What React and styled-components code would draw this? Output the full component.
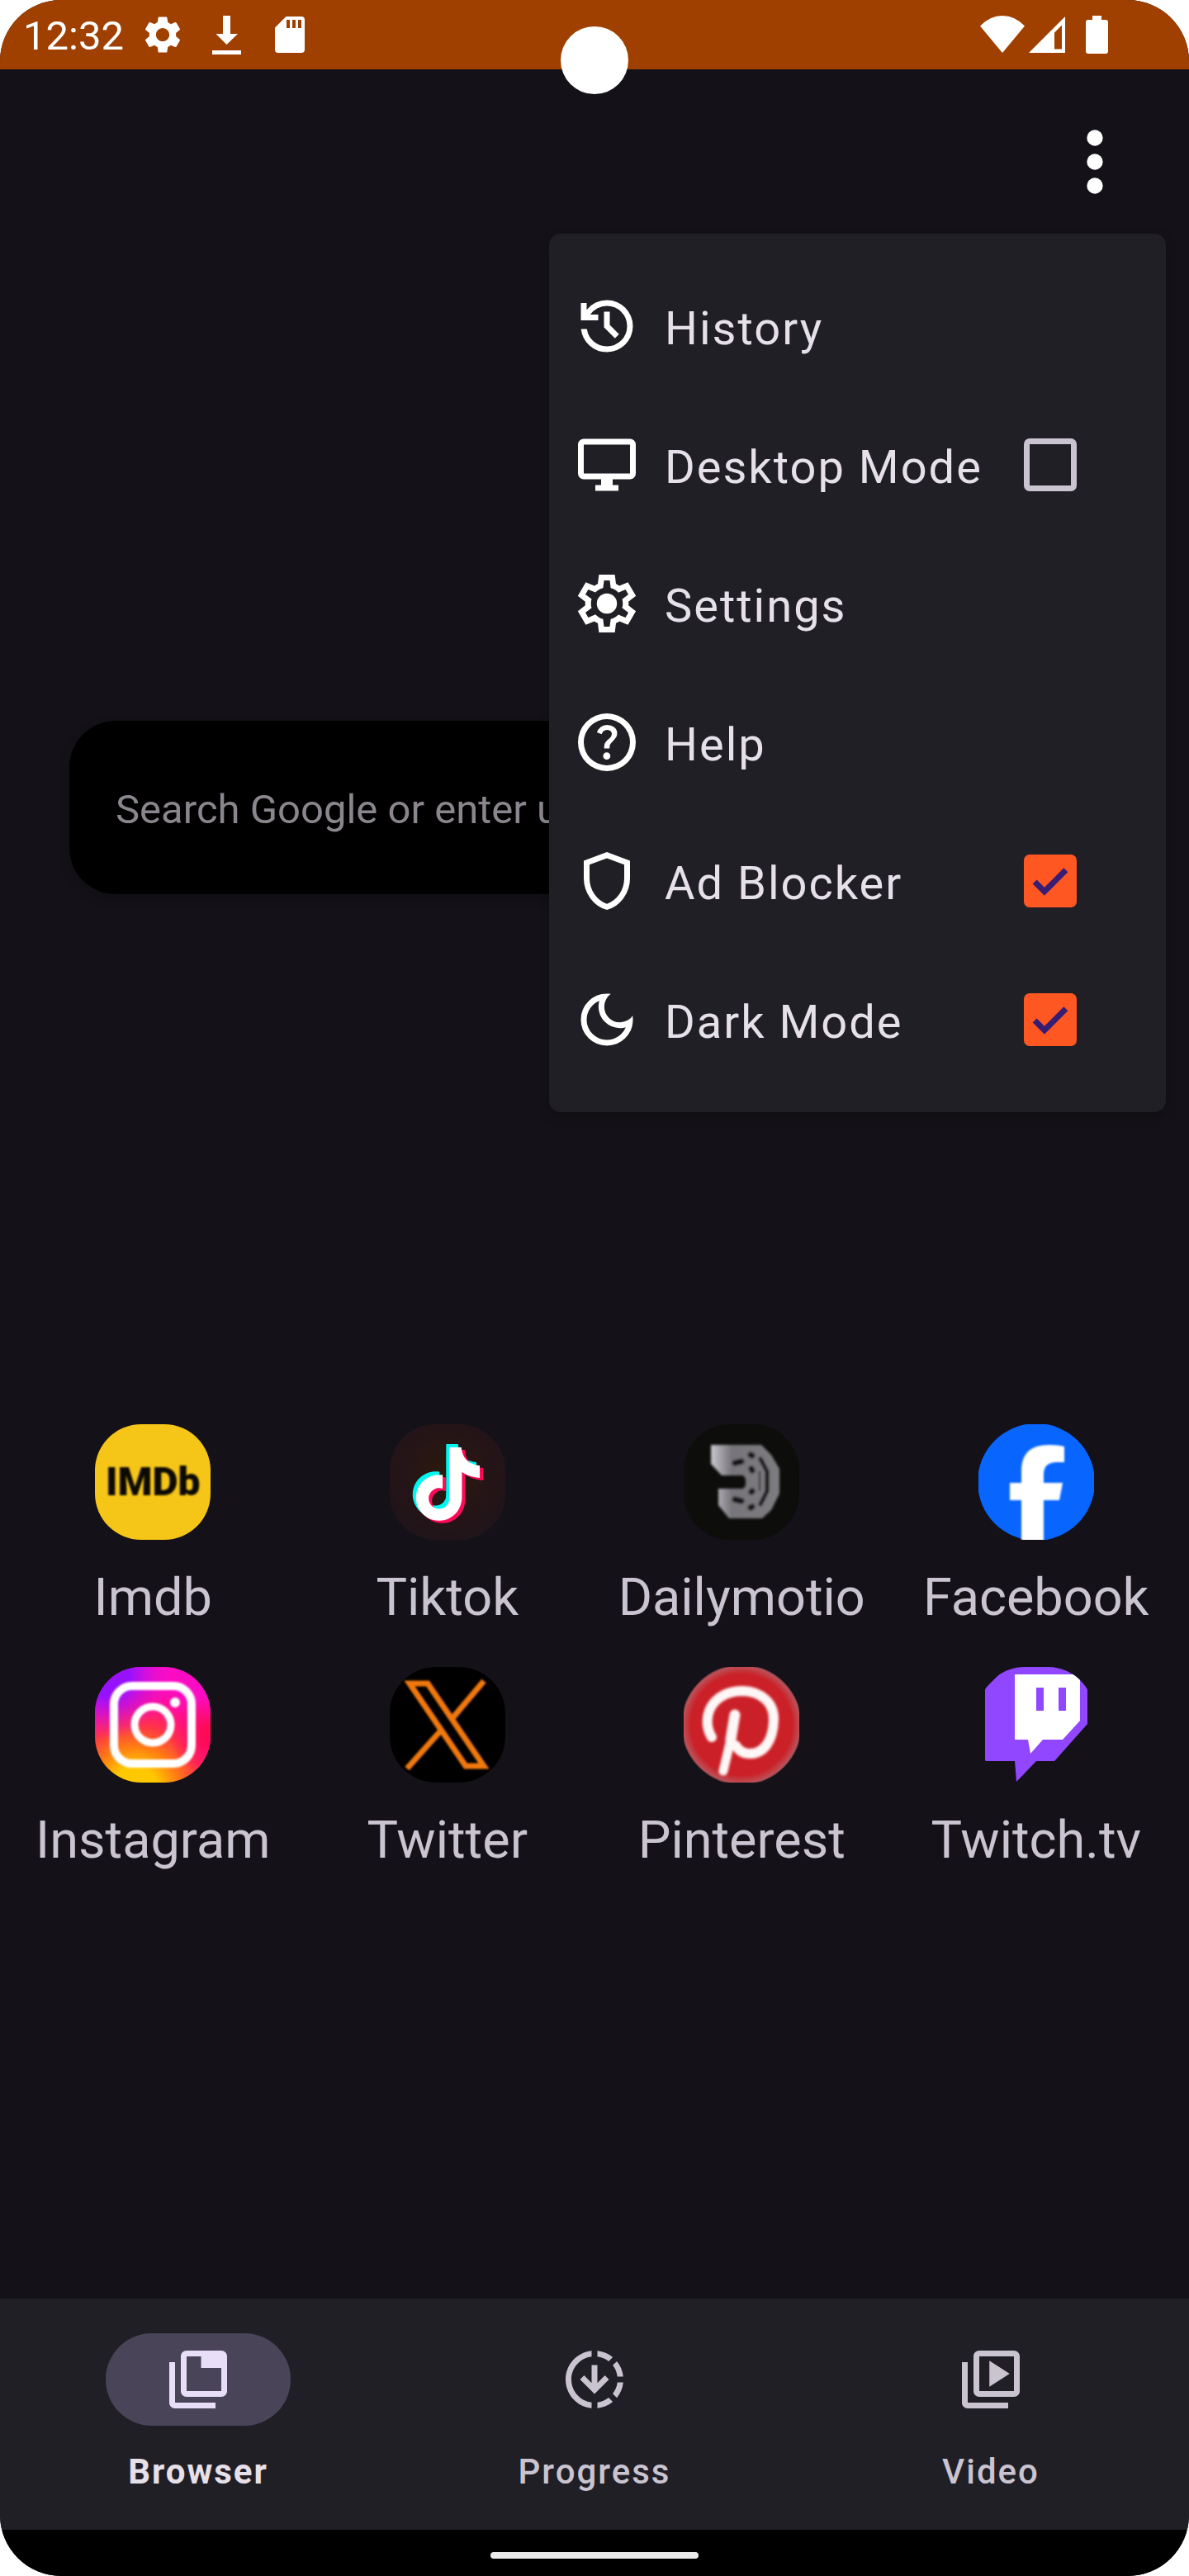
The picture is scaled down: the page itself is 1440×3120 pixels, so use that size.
import React, { useState } from "react";
import styled, { createGlobalStyle } from "styled-components";
import { MdSettings } from "react-icons/md";

const GlobalStyle = createGlobalStyle`
  *, *::before, *::after { box-sizing: border-box; }
  body { margin: 0; background: #ffffff; font-family: Roboto, "Noto Sans", sans-serif; }
`;

const Screen = styled.div`
  position: relative;
  display: flex;
  flex-direction: column;
  min-height: 100vh;
  overflow: hidden;
  border-radius: 74px;
  background: #141218;
`;

const StatusBar = styled.div`
  display: flex;
  justify-content: space-between;
  align-items: center;
  height: 84px;
  padding: 0 98px 0 28px;
  background: #a04000;
  color: #ffffff;
`;

const StatusLeft = styled.div`
  display: flex;
  align-items: center;
  gap: 20px;
`;

const StatusIcons = styled.div`
  display: flex;
  align-items: center;
  gap: ${(p) => p.$gap}px;

  svg { display: block; }
`;

const Clock = styled.time`
  padding-top: 4px;
  font-size: 49px;
  line-height: 58px;
`;

const CameraHole = styled.div`
  position: absolute;
  top: 32px;
  left: 50%;
  width: 82px;
  height: 82px;
  margin-left: -41px;
  border-radius: 50%;
  background: #ffffff;
`;

const Header = styled.header`
  position: relative;
  z-index: 1;
  display: flex;
  justify-content: flex-end;
  padding: 54px 56px 0 0;
`;

const MoreButton = styled.button`
  width: 116px;
  height: 116px;
  padding: 0;
  border: 0;
  background: transparent;
  color: #ffffff;

  svg { display: block; width: 100%; height: 100%; }
`;

const Menu = styled.div`
  position: absolute;
  top: 199px;
  right: 28px;
  width: 747px;
  padding: 28px 0;
  border-radius: 14px;
  background: #211f26;
  box-shadow: 0 6px 14px rgba(0, 0, 0, 0.25);
`;

const MenuRow = styled.div`
  display: flex;
  align-items: center;
  gap: 28px;
  width: 100%;
  height: 168px;
  padding: 0 108px 0 28px;
  border: 0;
  background: transparent;
  color: #e6e0e9;
  font: inherit;
  text-align: left;
`;

const MenuIcon = styled.svg`
  flex: none;
  width: 84px;
  height: 84px;
  fill: #ffffff;
`;

const MenuText = styled.span`
  flex: 1;
  padding-top: 6px;
  font-size: 56px;
  line-height: 66px;
  letter-spacing: 2px;
  white-space: nowrap;
`;

const CheckWrap = styled.span`
  display: grid;
  width: 64px;
  height: 64px;

  > * { grid-area: 1 / 1; }
  svg { width: 64px; height: 64px; fill: #381e72; pointer-events: none; }
`;

const CheckBox = styled.input`
  appearance: none;
  width: 64px;
  height: 64px;
  margin: 0;
  border: 7px solid #cac4d0;
  border-radius: 7px;
  background: transparent;

  &:checked { border-color: #ff5722; background: #ff5722; }
`;

const Main = styled.main`
  display: flex;
  flex: 1;
  flex-direction: column;
  gap: 642px;
  padding-top: 619px;
`;

const SearchBox = styled.input`
  height: 210px;
  margin: 0 84px;
  padding: 4px 56px 0;
  border: 0;
  border-radius: 56px;
  background: #000000;
  box-shadow: 0 6px 14px rgba(0, 0, 0, 0.2);
  color: #e6e0e9;
  font-family: inherit;
  font-size: 49px;

  &::placeholder { color: #8b868d; opacity: 1; }
`;

const Shortcuts = styled.nav`
  display: grid;
  grid-template-columns: repeat(4, 1fr);
  row-gap: 47px;
  padding: 0 7px;
`;

const Shortcut = styled.a`
  display: flex;
  flex-direction: column;
  align-items: center;
  gap: 33px;
  color: #cac4d0;
  font-size: 63px;
  line-height: 74px;
  text-decoration: none;
`;

const Tile = styled.span`
  display: flex;
  align-items: center;
  justify-content: center;
  width: 140px;
  height: 140px;
  overflow: hidden;
  border-radius: 56px;
  background: ${(p) => p.$bg || "transparent"};

  svg { display: block; }
`;

const ImdbMark = styled.span`
  color: #0c0a02;
  font-family: "Liberation Sans Narrow", Roboto, sans-serif;
  font-size: 48px;
  font-weight: 900;
  line-height: 54px;
  filter: blur(1px);
`;

const BottomNav = styled.nav`
  display: grid;
  grid-template-columns: repeat(3, 1fr);
  padding: 42px 0 45px;
  background: #211f26;
`;

const Tab = styled.button`
  display: flex;
  flex-direction: column;
  align-items: center;
  gap: 31px;
  padding: 0;
  border: 0;
  background: transparent;
  color: ${(p) => (p.$active ? "#e6e0e9" : "#cac4d0")};
  font-family: inherit;
  font-size: 42px;
  font-weight: ${(p) => (p.$active ? 700 : 500)};
  line-height: 50px;
  letter-spacing: 2px;
`;

const Pill = styled.span`
  display: flex;
  align-items: center;
  justify-content: center;
  width: 224px;
  height: 112px;
  border-radius: 56px;
  background: ${(p) => (p.$active ? "#4a4458" : "transparent")};
  color: ${(p) => (p.$active ? "#e8def8" : "#cac4d0")};

  svg { width: 84px; height: 84px; fill: currentColor; }
`;

const GestureBar = styled.div`
  display: flex;
  align-items: center;
  justify-content: center;
  height: 56px;
  padding-top: 6px;
  background: #000000;
`;

const GestureHandle = styled.div`
  width: 252px;
  height: 8px;
  border-radius: 4px;
  background: #ebebeb;
`;

const icons = {
  history:
    "M12 21q-3.45 0-6.012-2.288T3.05 13H5.1q.35 2.6 2.313 4.3T12 19q2.925 0 4.963-2.037T19 12t-2.037-4.962T12 5q-1.725 0-3.225.8T6.25 8H9v2H3V4h2v2.35q1.275-1.6 3.113-2.475T12 3q1.875 0 3.513.713t2.85 1.924t1.925 2.85T21 12t-.712 3.513t-1.925 2.85t-2.85 1.925T12 21m2.8-4.8L11 12.4V7h2v4.6l3.2 3.2z",
  desktop:
    "M8 21v-2h2v-2H4q-.825 0-1.412-.587T2 15V5q0-.825.588-1.412T4 3h16q.825 0 1.413.588T22 5v10q0 .825-.587 1.413T20 17h-6v2h2v2zm-4-6h16V5H4z",
  settings:
    "m9.25 22l-.4-3.2q-.325-.125-.612-.3t-.563-.375L4.7 19.375l-2.75-4.75l2.575-1.95Q4.5 12.5 4.5 12.338v-.675q0-.163.025-.338L1.95 9.375l2.75-4.75l2.975 1.25q.275-.2.575-.375t.6-.3l.4-3.2h5.5l.4 3.2q.325.125.613.3t.562.375l2.975-1.25l2.75 4.75l-2.575 1.95q.025.175.025.338v.674q0 .163-.05.338l2.575 1.95l-2.75 4.75l-2.95-1.25q-.275.2-.575.375t-.6.3l-.4 3.2zM11 20h1.975l.35-2.65q.775-.2 1.438-.587t1.212-.938l2.475 1.025l.975-1.7l-2.15-1.625q.125-.35.175-.737T17.5 12t-.05-.787t-.175-.738l2.15-1.625l-.975-1.7l-2.475 1.05q-.55-.575-1.212-.962t-1.438-.588L13 4h-1.975l-.35 2.65q-.775.2-1.437.588t-1.213.937L5.55 7.15l-.975 1.7l2.15 1.6q-.125.375-.175.75t-.05.8q0 .4.05.775t.175.75l-2.15 1.625l.975 1.7l2.475-1.05q.55.575 1.213.963t1.437.587zM12 15.5a3.5 3.5 0 1 0 0-7a3.5 3.5 0 0 0 0 7z",
  help:
    "M11.95 18q.525 0 .888-.363t.362-.887t-.362-.888t-.888-.362t-.887.363t-.363.887t.363.888t.887.362m-.9-3.85h1.85q0-.825.188-1.3t1.062-1.3q.65-.65 1.025-1.238T15.55 8.9q0-1.4-1.025-2.15T12.1 6q-1.425 0-2.312.75T8.55 8.55l1.65.65q.125-.45.563-.975T12.1 7.7q.8 0 1.2.438t.4.962q0 .5-.3.938t-.75.812q-1.1.975-1.35 1.475t-.25 1.825M12 22A10 10 0 1 0 12 2A10 10 0 1 0 12 22M12 20A8 8 0 1 1 12 4A8 8 0 1 1 12 20",
  shield:
    "M12 22q-3.475-.875-5.738-3.988T4 11.1V5l8-3l8 3v6.1q0 3.8-2.262 6.913T12 22m0-2.1q2.6-.825 4.3-3.3t1.7-5.5V6.375l-6-2.25l-6 2.25V11.1q0 3.025 1.7 5.5t4.3 3.3",
  moon:
    "M12 21q-3.75 0-6.375-2.625T3 12t2.625-6.375T12 3q.35 0 .688.025t.662.075q-1.025.725-1.638 1.888T11.1 7.5q0 2.25 1.575 3.825T16.5 12.9q1.375 0 2.525-.613T20.9 10.65q.05.325.075.662T21 12q0 3.75-2.625 6.375T12 21m0-2q2.2 0 3.95-1.212t2.55-3.163q-.5.125-1 .2t-1 .075q-3.075 0-5.238-2.163T9.1 7.5q0-.5.075-1t.2-1q-1.95.8-3.163 2.55T5 12q0 2.9 2.05 4.95T12 19",
};

const menuItems = [
  { label: "History", icon: "history" },
  { label: "Desktop Mode", icon: "desktop", toggle: true, initial: false },
  { label: "Settings", icon: "settings" },
  { label: "Help", icon: "help" },
  { label: "Ad Blocker", icon: "shield", toggle: true, initial: true },
  { label: "Dark Mode", icon: "moon", toggle: true, initial: true },
];

function MenuItem({ label, icon, toggle, initial }) {
  const [on, setOn] = useState(initial);
  return (
    <MenuRow as={toggle ? "label" : "button"}>
      <MenuIcon viewBox="0 0 24 24" aria-hidden="true">
        <path fillRule="evenodd" d={icons[icon]} />
      </MenuIcon>
      <MenuText>{label}</MenuText>
      {toggle && (
        <CheckWrap>
          <CheckBox type="checkbox" checked={on} onChange={() => setOn(!on)} />
          {on && (
            <svg viewBox="3 3 18 18" aria-hidden="true">
              <path d="M10 17L6 13l1.4-1.4L10 14.2l6.6-6.6L18 9z" />
            </svg>
          )}
        </CheckWrap>
      )}
    </MenuRow>
  );
}

function Logo({ children }) {
  return (
    <svg width="140" height="140" viewBox="0 0 140 140" aria-hidden="true">
      {children}
    </svg>
  );
}

const notePath =
  "M12.525.02c1.31-.02 2.61-.01 3.91-.02.08 1.53.63 3.09 1.75 4.17 1.12 1.11 2.7 1.62 4.24 1.79v4.03c-1.44-.05-2.89-.35-4.2-.97-.57-.26-1.1-.59-1.62-.93-.01 2.92.01 5.84-.02 8.75-.08 1.4-.54 2.79-1.35 3.94-1.31 1.92-3.58 3.17-5.91 3.21-1.43.08-2.86-.31-4.08-1.03-2.02-1.19-3.44-3.37-3.65-5.71-.02-.5-.03-1-.01-1.49.18-1.9 1.12-3.72 2.58-4.96 1.66-1.44 3.98-2.13 6.15-1.72.02 1.48-.04 2.96-.04 4.44-.99-.32-2.15-.23-3.02.37-.63.41-1.11 1.04-1.36 1.75-.21.51-.15 1.07-.14 1.61.24 1.64 1.82 3.02 3.5 2.87 1.12-.01 2.19-.66 2.77-1.61.19-.33.4-.67.41-1.06.1-1.79.06-3.57.07-5.36.01-4.03-.01-8.05.02-12.07z";

const TiktokLogo = () => (
  <Logo>
    <g transform="translate(22 24) scale(3.7)" fill="#00f7ef">
      <path d={notePath} />
    </g>
    <g transform="translate(30 31) scale(3.7)" fill="#ff0a5a">
      <path d={notePath} />
    </g>
    <g transform="translate(26 28) scale(3.7)" fill="#ffffff">
      <path d={notePath} />
    </g>
  </Logo>
);

const DailymotionLogo = () => (
  <Logo>
    <defs>
      <linearGradient id="dmShade" x1="0" y1="0" x2="1" y2="0">
        <stop offset="0" stopColor="#c9c7cf" />
        <stop offset="0.3" stopColor="#77757a" />
        <stop offset="1" stopColor="#7d7b80" />
      </linearGradient>
      <filter id="dmBlur">
        <feGaussianBlur stdDeviation="1.6" />
      </filter>
    </defs>
    <g filter="url(#dmBlur)">
      <path
        fill="url(#dmShade)"
        d="M33 25H94L106 37L116 54V84L106 104L95 114H55L42 98V78H72L75 74V66L72 62H46L33 48Z"
      />
      <g fill="none" stroke="#141317" strokeWidth="7" strokeLinecap="round">
        <path d="M62 47L70 45M81 37L83 38M82 54L83 56M82 82L83 81M62 91L70 93M81 101L83 100" />
        <path strokeWidth="5" d="M93 42L101 57V81L93 97" />
        <path strokeWidth="2" d="M92 58V80" />
      </g>
    </g>
  </Logo>
);

const FacebookLogo = () => (
  <Logo>
    <defs>
      <filter id="fbBlur">
        <feGaussianBlur stdDeviation="0.8" />
      </filter>
    </defs>
    <circle cx="70" cy="70" r="71" fill="#0866ff" />
    <path
      fill="#ffffff"
      filter="url(#fbBlur)"
      d="M52 144V92H38V71H52V58C52 36 62 25 86 25Q97 25 104 27V46H96C84 46 79 51 79 61V71H102L98 92H79V144Z"
    />
  </Logo>
);

const InstagramLogo = () => (
  <Logo>
    <defs>
      <radialGradient id="igBase" gradientUnits="userSpaceOnUse" cx="48" cy="150" r="160">
        <stop offset="0.18" stopColor="#ffc800" />
        <stop offset="0.34" stopColor="#ff7a14" />
        <stop offset="0.5" stopColor="#ff3348" />
        <stop offset="0.66" stopColor="#ff1090" />
        <stop offset="0.82" stopColor="#fb0cc4" />
      </radialGradient>
      <radialGradient id="igViolet" gradientUnits="userSpaceOnUse" cx="14" cy="8" r="80">
        <stop offset="0.35" stopColor="#9612ff" />
        <stop offset="1" stopColor="#f010d0" stopOpacity="0" />
      </radialGradient>
      <radialGradient id="igRose" gradientUnits="userSpaceOnUse" cx="140" cy="82" r="50">
        <stop offset="0.2" stopColor="#ff0a55" />
        <stop offset="1" stopColor="#ff0a70" stopOpacity="0" />
      </radialGradient>
      <filter id="igBlur">
        <feGaussianBlur stdDeviation="1.2" />
      </filter>
    </defs>
    <rect width="140" height="140" fill="url(#igBase)" />
    <rect width="140" height="140" fill="url(#igViolet)" />
    <rect width="140" height="140" fill="url(#igRose)" />
    <g fill="none" stroke="#ffffff" filter="url(#igBlur)">
      <rect x="23" y="23" width="94" height="94" rx="22" strokeWidth="10" />
      <circle cx="70" cy="70" r="22" strokeWidth="9" />
      <circle cx="97" cy="43" r="3" strokeWidth="6" />
    </g>
  </Logo>
);

const TwitterLogo = () => (
  <Logo>
    <defs>
      <filter id="twBlur">
        <feGaussianBlur stdDeviation="0.8" />
      </filter>
    </defs>
    <g fill="none" stroke="#f0780c" strokeWidth="7" filter="url(#twBlur)">
      <path d="M24 20H46L114 120H92Z" />
      <path d="M114 17L76 62M21 123L61 78" />
    </g>
  </Logo>
);

const PinterestLogo = () => (
  <Logo>
    <defs>
      <radialGradient id="pinRed">
        <stop offset="0.84" stopColor="#cb2027" />
        <stop offset="0.97" stopColor="#bd5057" />
        <stop offset="1" stopColor="#5c3540" />
      </radialGradient>
      <filter id="pinBlur">
        <feGaussianBlur stdDeviation="1.6" />
      </filter>
    </defs>
    <circle cx="70" cy="70" r="73" fill="url(#pinRed)" />
    <g fill="none" stroke="#fff6f6" strokeLinecap="round" filter="url(#pinBlur)">
      <path strokeWidth="12" d="M34 85C26 72 27 55 37 43C46 33 59 29 72 29C95 30 110 44 109 65C108 90 97 105 80 105C72 105 67 102 63 95" />
      <path strokeWidth="13" d="M62 58L57 88" />
      <path strokeWidth="11" d="M57 88L48 126" />
    </g>
  </Logo>
);

const TwitchLogo = () => (
  <Logo>
    <path fill="#9146ff" d="M8 26L34 0H132V69L92 114H70L46 139L44 114H8Z" />
    <path fill="#ffffff" d="M44 9H123V65L102 88H78L63 105L60 88H44Z" />
    <path fill="#9146ff" d="M70 25H79V53H70ZM97 25H106V53H97Z" />
  </Logo>
);

const shortcuts = [
  { name: "Imdb", bg: "#f5c518", logo: <ImdbMark aria-hidden="true">IMDb</ImdbMark> },
  {
    name: "Tiktok",
    bg: "radial-gradient(circle at 50% 42%, #2b1a0c 0%, #251417 50%, #1b151c 100%)",
    logo: <TiktokLogo />,
  },
  { name: "Dailymotio", bg: "#0d0d0b", logo: <DailymotionLogo /> },
  { name: "Facebook", logo: <FacebookLogo /> },
  { name: "Instagram", logo: <InstagramLogo /> },
  { name: "Twitter", bg: "#000000", logo: <TwitterLogo /> },
  { name: "Pinterest", logo: <PinterestLogo /> },
  { name: "Twitch.tv", logo: <TwitchLogo /> },
];

const stackPath =
  "M2 6h2v14h14v2H4c-1.1 0-2-.9-2-2zM8 2h12c1.1 0 2 .9 2 2v12c0 1.1-.9 2-2 2H8c-1.1 0-2-.9-2-2V4c0-1.1.9-2 2-2zM8 4v12h12V4z";

const tabs = [
  { name: "Browser", active: true, paths: [stackPath, "M13 4h7v4h-7z"] },
  {
    name: "Progress",
    paths: [
      "M18.32 4.26C16.84 3.05 15.01 2.25 13 2.05v2.02c1.46.18 2.79.76 3.9 1.62zM19.93 11h2.02c-.2-2.01-1-3.84-2.21-5.32L18.31 7.1c.86 1.11 1.44 2.44 1.62 3.9zM18.31 16.9l1.43 1.43c1.21-1.48 2.01-3.32 2.21-5.32h-2.02c-.18 1.45-.76 2.78-1.62 3.89zM13 19.93v2.02c2.01-.2 3.84-1 5.32-2.21l-1.43-1.43c-1.1.86-2.43 1.44-3.89 1.62zM11 19.93v2.02c-5.05-.5-9-4.76-9-9.95s3.95-9.45 9-9.95v2.02C7.05 4.56 4 7.92 4 12s3.05 7.44 7 7.93z",
      "M11 7h2v6.2l2.6-2.6L17 12l-5 5-5-5 1.4-1.4 2.6 2.6z",
    ],
  },
  { name: "Video", paths: [stackPath, "M11.5 14.5v-9l7 4.5z"] },
];

export default function App() {
  return (
    <>
      <GlobalStyle />
      <Screen>
        <StatusBar>
          <StatusLeft>
            <Clock>12:32</Clock>
            <StatusIcons $gap={23}>
              <MdSettings size={54} />
              <svg width="54" height="54" fill="#ffffff" aria-hidden="true">
                <path d="M23 4H32V26H41L27.500 39L14.500 26H23ZM10 46H45V51H10Z" />
              </svg>
              <svg width="54" height="54" fill="#ffffff" aria-hidden="true">
                <path
                  fillRule="evenodd"
                  d="M22.500 5H41Q45 5 45 9V45Q45 49 41 49H13Q9 49 9 45V18.500ZM23 9V19H27V9ZM30 9V19H34V9ZM37 9V19H41V9Z"
                />
              </svg>
            </StatusIcons>
          </StatusLeft>
          <StatusIcons $gap={5}>
            <svg width="54" height="46" fill="#ffffff" aria-hidden="true">
              <path d="M0 12.500Q12 0 27 0T54 12.500L27 45Z" />
            </svg>
            <svg width="64" height="46" fill="#ffffff" aria-hidden="true">
              <path fillRule="evenodd" d="M0 45L44 1V45ZM31 20.500V40.500H40V11.500Z" />
            </svg>
            <svg width="27" height="46" fill="#ffffff" aria-hidden="true">
              <path d="M8 0H19V5H24Q27 5 27 8V43Q27 46 24 46H3Q0 46 0 43V8Q0 5 3 5H8Z" />
            </svg>
          </StatusIcons>
        </StatusBar>
        <CameraHole />
        <Header>
          <MoreButton aria-label="More options">
            <svg viewBox="0 0 24 24" fill="currentColor" aria-hidden="true">
              <circle cx="12" cy="6" r="2" />
              <circle cx="12" cy="12" r="2" />
              <circle cx="12" cy="18" r="2" />
            </svg>
          </MoreButton>
          <Menu>
            {menuItems.map((item) => (
              <MenuItem key={item.label} {...item} />
            ))}
          </Menu>
        </Header>
        <Main>
          <SearchBox
            type="text"
            aria-label="Search"
            placeholder="Search Google or enter url"
          />
          <Shortcuts>
            {shortcuts.map(({ name, bg, logo }) => (
              <Shortcut key={name} href="#">
                <Tile $bg={bg}>{logo}</Tile>
                <span>{name}</span>
              </Shortcut>
            ))}
          </Shortcuts>
        </Main>
        <BottomNav>
          {tabs.map(({ name, active, paths }) => (
            <Tab key={name} $active={active}>
              <Pill $active={active}>
                <svg viewBox="0 0 24 24" aria-hidden="true">
                  {paths.map((d) => (
                    <path key={d} fillRule="evenodd" d={d} />
                  ))}
                </svg>
              </Pill>
              <span>{name}</span>
            </Tab>
          ))}
        </BottomNav>
        <GestureBar>
          <GestureHandle />
        </GestureBar>
      </Screen>
    </>
  );
}
